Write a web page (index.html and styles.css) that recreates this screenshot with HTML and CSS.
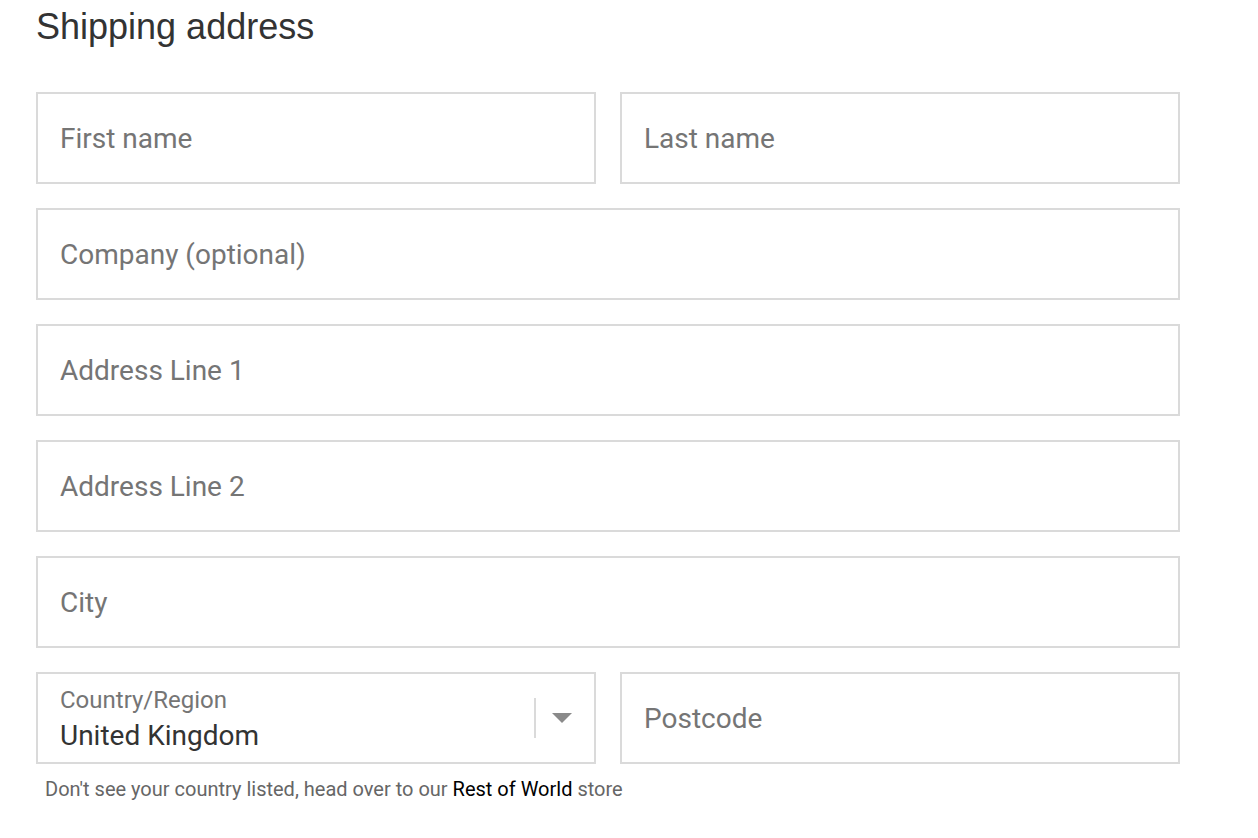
FILE: index.html
```html
<!DOCTYPE html>
<html>
<head>
<meta charset="utf-8">
<link rel="stylesheet" href="styles.css">
</head>
<body>
<div class="form">
  <h2 class="title">Shipping address</h2>
  <div class="row two">
    <div class="field"><span class="ph">First name</span></div>
    <div class="field"><span class="ph">Last name</span></div>
  </div>
  <div class="row"><div class="field"><span class="ph">Company (optional)</span></div></div>
  <div class="row"><div class="field"><span class="ph">Address Line 1</span></div></div>
  <div class="row"><div class="field"><span class="ph">Address Line 2</span></div></div>
  <div class="row"><div class="field"><span class="ph">City</span></div></div>
  <div class="row two">
    <div class="field select">
      <div class="sel-text">
        <span class="sel-label">Country/Region</span>
        <span class="sel-value">United Kingdom</span>
      </div>
      <span class="sep"></span>
      <span class="arrow"></span>
    </div>
    <div class="field"><span class="ph">Postcode</span></div>
  </div>
  <p class="note">Don't see your country listed, head over to our <span class="link">Rest of World</span> store</p>
</div>
</body>
</html>
```
FILE: styles.css
```css
html, body { margin: 0; padding: 0; background: #fff; }
body { font-family: Roboto, "Liberation Sans", sans-serif; }
.form { width: 1144px; padding-left: 36px; }
.title {
  font-family: "Liberation Sans", Arial, sans-serif;
  font-weight: 400;
  font-size: 36px;
  color: #333;
  margin: 0;
  padding-top: 7px;
  height: 92px;
  line-height: 40px;
  box-sizing: border-box;
}
.row { display: grid; grid-template-columns: 1fr; gap: 24px; margin-bottom: 24px; }
.row.two { grid-template-columns: 1fr 1fr; }
.field {
  min-width: 0;
  height: 92px;
  box-sizing: border-box;
  border: 2px solid #dadada;
  display: flex;
  align-items: center;
  padding: 0 22px;
}
.ph { font-size: 28px; color: #757575; }
.select { padding-right: 0; }
.sel-text { flex: 1; display: flex; flex-direction: column; gap: 3px; padding-top: 2px; }
.sel-label { font-size: 24px; color: #757575; line-height: 30px; }
.sel-value { font-size: 28px; color: #333; line-height: 36px; }
.sep { width: 2px; height: 40px; background: #dadada; }
.arrow {
  width: 0; height: 0;
  border-left: 10px solid transparent;
  border-right: 10px solid transparent;
  border-top: 10px solid #8a8a8a;
  margin: 0 22px 0 16px;
}
.row:last-of-type { margin-bottom: 0; }
.note {
  margin: 13px 0 0 9px;
  font-size: 20px;
  line-height: 24px;
  color: #666;
}
.link { color: #000; }
```
